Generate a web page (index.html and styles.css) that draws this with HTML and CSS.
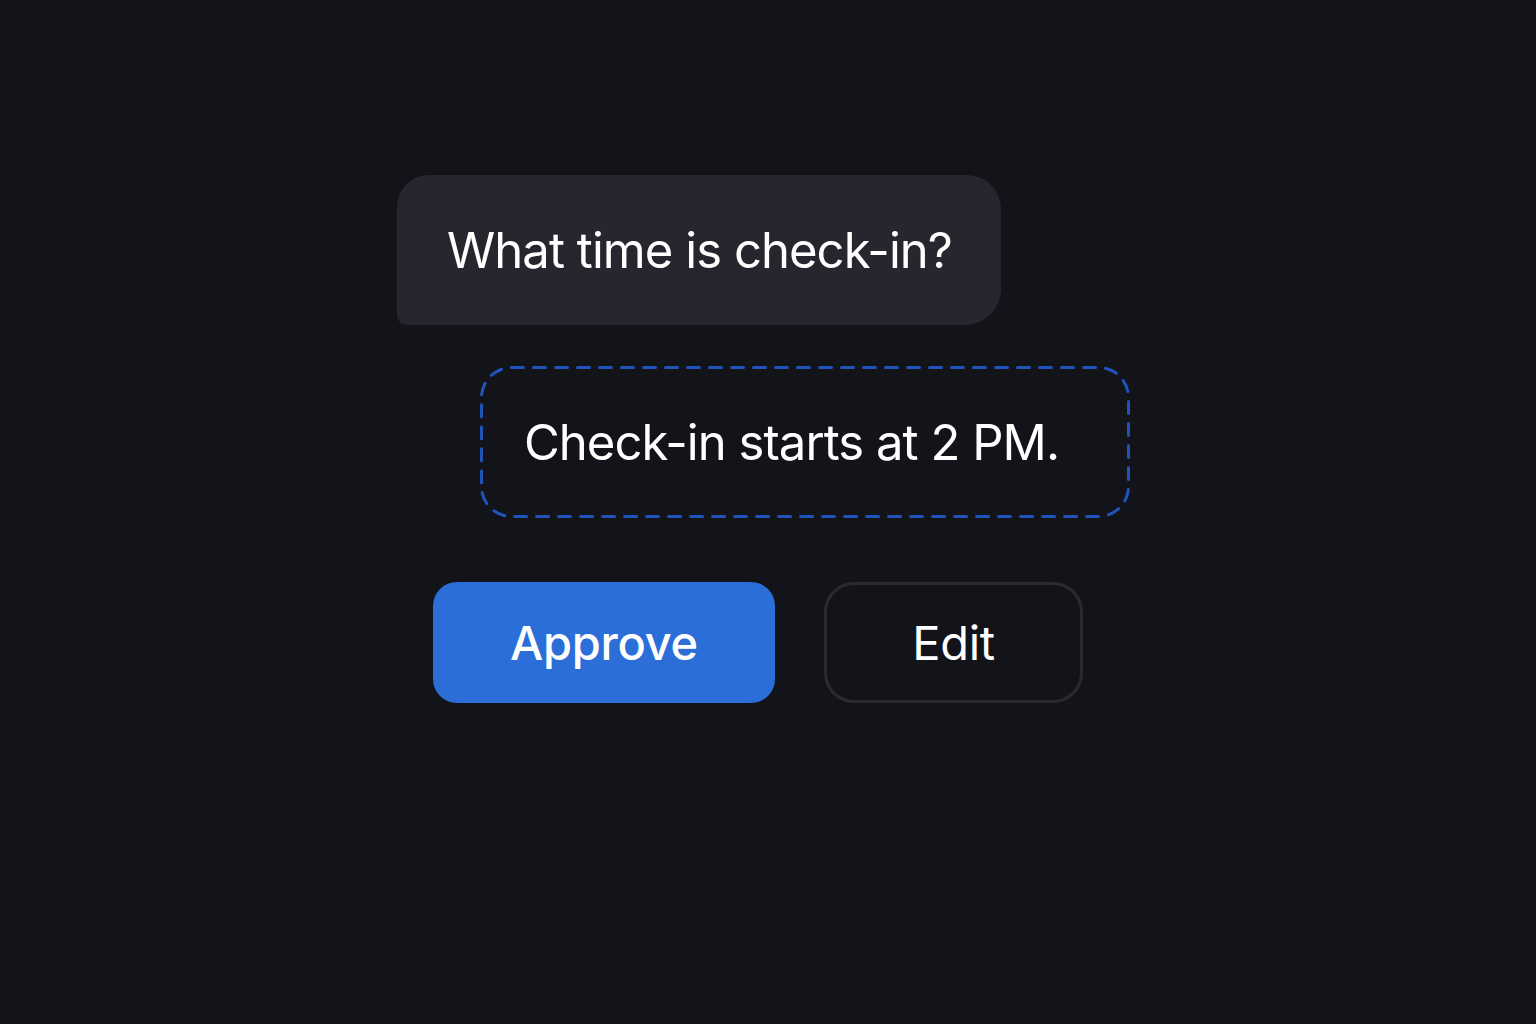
FILE: index.html
```html
<!DOCTYPE html>
<html lang="en">
<head>
<meta charset="utf-8">
<title>Chat approval</title>
<link rel="stylesheet" href="styles.css">
</head>
<body>
<main class="stage">
  <div class="bubble bubble-user">What time is check-in?</div>
  <div class="bubble bubble-draft">
    <svg class="dash-frame" width="650" height="152" viewBox="0 0 650 152" aria-hidden="true">
      <rect x="1.5" y="1.5" width="647" height="149" rx="30" ry="30" fill="none" stroke="#2154bb" stroke-width="3" stroke-dasharray="12 10" stroke-linecap="round"/>
    </svg>
    <span class="draft-text">Check-in starts at 2 PM.</span>
  </div>
  <div class="actions">
    <button class="btn btn-approve">Approve</button>
    <button class="btn btn-edit">Edit</button>
  </div>
</main>
</body>
</html>
```
FILE: styles.css
```css
html, body {
  margin: 0;
  padding: 0;
  background: #121419;
  width: 1536px;
  height: 1024px;
  overflow: hidden;
}
body {
  font-family: Inter, "Noto Sans", "Liberation Sans", sans-serif;
  color: #ffffff;
}
.stage {
  display: flex;
  flex-direction: column;
  align-items: flex-start;
  padding-top: 175px;
}
.bubble {
  box-sizing: border-box;
  display: flex;
  align-items: center;
  font-size: 49px;
  font-weight: 400;
  letter-spacing: -0.95px;
  white-space: nowrap;
}
.bubble-user {
  margin-left: 397px;
  width: 604px;
  height: 150px;
  padding-left: 50px;
  background: #25262e;
  border-radius: 32px 34px 36px 10px;
}
.bubble-draft {
  position: relative;
  margin-left: 480px;
  margin-top: 41px;
  width: 650px;
  height: 152px;
  padding-left: 44px;
}
.dash-frame {
  position: absolute;
  left: 0;
  top: 0;
}
.draft-text {
  position: relative;
}
.actions {
  display: flex;
  gap: 49px;
  margin-left: 433px;
  margin-top: 64px;
}
.btn {
  box-sizing: border-box;
  height: 121px;
  font-family: inherit;
  font-size: 47px;
  color: #ffffff;
  display: flex;
  align-items: center;
  justify-content: center;
  cursor: pointer;
  letter-spacing: -0.3px;
}
.btn-approve {
  width: 342px;
  background: #2c6ed8;
  border: none;
  border-radius: 24px;
  font-weight: 500;
}
.btn-edit {
  width: 259px;
  background: transparent;
  border: 3px solid #2a2b31;
  border-radius: 30px;
  font-weight: 400;
}
```
